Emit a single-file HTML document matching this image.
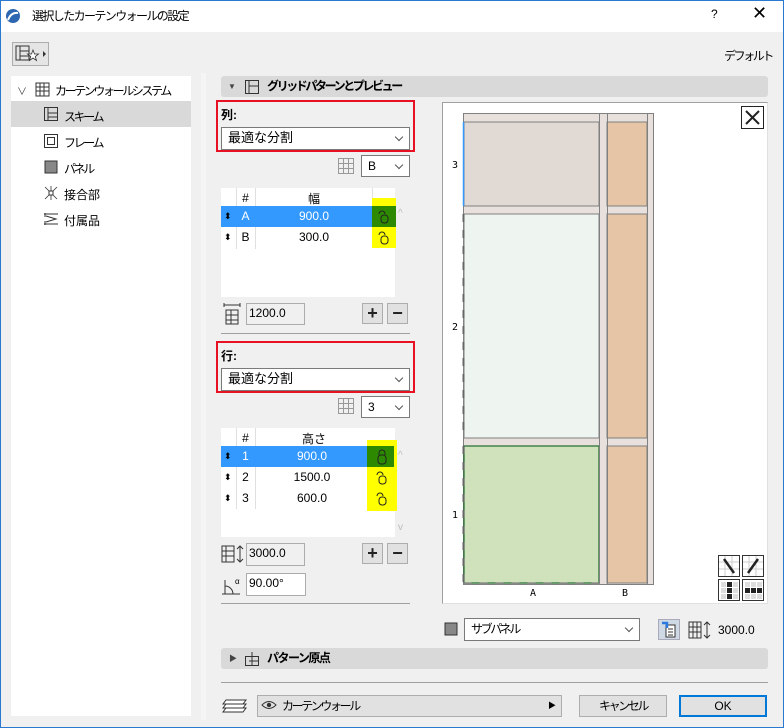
<!DOCTYPE html>
<html><head><meta charset="utf-8"><style>
*{box-sizing:border-box;margin:0;padding:0}
body{width:784px;height:728px;background:#f0f0f0;font-family:"Liberation Sans","Noto Sans CJK JP",sans-serif;font-size:12px;color:#000;position:relative;overflow:hidden}
.a{position:absolute}
.j{letter-spacing:-2.4px}
.sel{position:absolute;background:#fff;border:1px solid #7a7a7a;padding-left:6px;line-height:20px;font-size:12px}
.sel:after{content:"";position:absolute;right:7px;top:6px;width:5px;height:5px;border-right:1px solid #555;border-bottom:1px solid #555;transform:rotate(45deg)}
.inp{position:absolute;background:#fff;border:1px solid #acacac;line-height:19px;padding-left:2px;font-size:12px}
.btn{position:absolute;background:#e1e1e1;border:1px solid #adadad;text-align:center;font-size:18px;line-height:18px;font-weight:bold;color:#222}
.hdr{position:absolute;left:221px;width:547px;height:21px;background:#d9d9d9;border-radius:3px;font-weight:bold;font-size:12px;line-height:21px}
.red{position:absolute;border:2px solid #e81123}
.row{position:absolute;left:221px;width:174px;height:21px;line-height:21px}
.c{position:absolute;text-align:center}
.tx{font-size:10px;font-family:"DejaVu Sans Mono",monospace}
</style></head><body>
<div class="a" style="left:0;top:0;width:784px;height:728px;border:1px solid #2b78d0"></div>
<div class="a" style="left:1px;top:1px;width:782px;height:31px;background:#fff"></div>
<svg class="a" style="left:5px;top:8px" width="16" height="16"><circle cx="8" cy="8" r="7" fill="#2e67b1"/><path d="M3 12 Q6 4 13 5" stroke="#fff" stroke-width="2" fill="none"/></svg>
<div class="a" style="left:32px;top:7px;font-size:12px;letter-spacing:-1.6px">選択したカーテンウォールの設定</div>
<div class="a" style="left:711px;top:7px;font-size:12px">?</div>
<div class="a" style="left:752px;top:3px;font-size:18px;font-weight:300">✕</div>

<div class="a" style="left:12px;top:42px;width:37px;height:24px;background:#e5e5e5;border:1px solid #adadad"></div>
<svg class="a" style="left:14px;top:44px" width="34" height="20"><rect x="2" y="2" width="13" height="14" fill="none" stroke="#333"/><path d="M6 2v14M6 7h9M6 12h9" stroke="#333" fill="none"/><path d="M19 6l1.5 4h4l-3.2 2.5 1.2 4-3.5-2.5-3.5 2.5 1.2-4L13.5 10h4z" fill="#fff" stroke="#333" stroke-width=".8"/><path d="M29 7l3 3-3 3z" fill="#333"/></svg>
<div class="a j" style="left:724px;top:47px">デフォルト</div>

<div class="a" style="left:11px;top:76px;width:180px;height:640px;background:#fff"></div>
<div class="a" style="left:201px;top:73px;width:5px;height:647px;background:#f5f5f5"></div>
<div class="a" style="left:11px;top:101px;width:180px;height:26px;background:#d9d9d9"></div>
<div class="a" style="left:17px;top:83px;font-size:10px;color:#444">∨</div>
<svg class="a" style="left:34px;top:81px" width="16" height="16"><path d="M2 2h13v13H2zM2 6h13M2 10h13M6 2v13M10 2v13" stroke="#333" fill="none"/></svg>
<div class="a j" style="left:55px;top:82px">カーテンウォールシステム</div>
<svg class="a" style="left:43px;top:106px" width="16" height="16"><rect x="1.5" y="1.5" width="13" height="13" fill="none" stroke="#333"/><path d="M5 1.5v13M5 7h9.5M5 11h9.5" stroke="#333"/></svg>
<div class="a j" style="left:64px;top:108px">スキーム</div>
<svg class="a" style="left:43px;top:133px" width="16" height="16"><rect x="1.5" y="1.5" width="13" height="13" fill="none" stroke="#333"/><rect x="4.5" y="4.5" width="7" height="7" fill="none" stroke="#333"/></svg>
<div class="a j" style="left:64px;top:134px">フレーム</div>
<svg class="a" style="left:43px;top:159px" width="16" height="16"><rect x="2" y="2" width="12" height="12" fill="#888" stroke="#333"/></svg>
<div class="a j" style="left:64px;top:160px">パネル</div>
<svg class="a" style="left:43px;top:185px" width="16" height="16"><path d="M2 2l12 12M14 2L2 14M8 1v14" stroke="#333" stroke-width=".8"/><rect x="6" y="6" width="4" height="4" fill="#fff" stroke="#333"/></svg>
<div class="a" style="left:64px;top:186px">接合部</div>
<svg class="a" style="left:43px;top:211px" width="16" height="16"><path d="M1 3h14M1 13h14M3 5l10 3-10 3M2 2v4M2 10v4" stroke="#333" fill="none"/></svg>
<div class="a" style="left:64px;top:212px">付属品</div>

<div class="hdr" style="top:76px"><span style="position:absolute;left:7px;font-size:8px;color:#444">▼</span><svg style="position:absolute;left:23px;top:3px" width="16" height="16"><rect x="1.5" y="1.5" width="13" height="13" fill="none" stroke="#333"/><path d="M5 1.5v13M5 7h9.5" stroke="#333"/></svg><span class="j" style="position:absolute;left:46px">グリッドパターンとプレビュー</span></div>

<div class="red" style="left:216px;top:100px;width:199px;height:52px"></div>
<div class="a" style="left:221px;top:106px;font-weight:bold">列:</div>
<div class="sel" style="left:221px;top:127px;width:189px;height:23px;font-size:13px">最適な分割</div>
<svg class="a" style="left:337px;top:157px" width="18" height="18"><path d="M1.5 1.5h15v15h-15zM1.5 6.5h15M1.5 11.5h15M6.5 1.5v15M11.5 1.5v15" stroke="#999" fill="none"/></svg>
<div class="sel" style="left:361px;top:155px;width:49px;height:22px">B</div>

<div class="a" style="left:221px;top:188px;width:174px;height:109px;background:#fff"></div>
<div class="a" style="left:236px;top:188px;width:1px;height:61px;background:#e0e0e0"></div>
<div class="a" style="left:255px;top:188px;width:1px;height:61px;background:#e0e0e0"></div>
<div class="a" style="left:372px;top:188px;width:1px;height:18px;background:#e0e0e0"></div>
<div class="c" style="left:236px;top:191px;width:19px">#</div>
<div class="c" style="left:256px;top:190px;width:116px">幅</div>
<div class="row" style="top:206px;background:#3399ff;width:151px;color:#fff"><span class="a" style="left:3px;color:#000;font-size:9px">⬍</span><span class="c" style="left:15px;width:19px">A</span><span class="c" style="left:35px;width:116px">900.0</span></div>
<div class="a" style="left:372px;top:198px;width:24px;height:50px;background:#ffff00"></div>
<div class="a" style="left:372px;top:206px;width:24px;height:21px;background:#2d8a00"></div>
<div class="row" style="top:227px"><span class="a" style="left:3px;font-size:9px">⬍</span><span class="c" style="left:15px;width:19px">B</span><span class="c" style="left:35px;width:116px">300.0</span></div>
<svg class="a" style="left:376px;top:208px" width="14" height="40"><path d="M3 6a3 3 0 0 1 6 0" stroke="#222" fill="none"/><rect x="5" y="7" width="7" height="8" rx="3" fill="none" stroke="#222"/><path d="M3 27a3 3 0 0 1 6 0" stroke="#222" fill="none"/><rect x="5" y="28" width="7" height="8" rx="3" fill="none" stroke="#222"/></svg>
<div class="a" style="left:398px;top:208px;color:#bbb;font-size:10px">^</div>
<svg class="a" style="left:222px;top:302px" width="20" height="24"><path d="M2 3h16M2 1v4M18 1v4M4 8h12v14H4zM4 13h12M4 18h12M9 8v14" stroke="#333" fill="none"/></svg>
<div class="inp" style="left:246px;top:303px;width:59px;height:22px;background:#f0f0f0">1200.0</div>
<div class="btn" style="left:362px;top:303px;width:21px;height:21px">+</div>
<div class="btn" style="left:387px;top:303px;width:21px;height:21px">−</div>
<div class="a" style="left:221px;top:333px;width:189px;height:1px;background:#a0a0a0"></div>

<div class="red" style="left:216px;top:341px;width:199px;height:52px"></div>
<div class="a" style="left:221px;top:347px;font-weight:bold">行:</div>
<div class="sel" style="left:221px;top:368px;width:189px;height:23px;font-size:13px">最適な分割</div>
<svg class="a" style="left:337px;top:397px" width="18" height="18"><path d="M1.5 1.5h15v15h-15zM1.5 6.5h15M1.5 11.5h15M6.5 1.5v15M11.5 1.5v15" stroke="#999" fill="none"/></svg>
<div class="sel" style="left:361px;top:396px;width:49px;height:22px">3</div>

<div class="a" style="left:221px;top:428px;width:174px;height:109px;background:#fff"></div>
<div class="a" style="left:236px;top:428px;width:1px;height:81px;background:#e0e0e0"></div>
<div class="a" style="left:255px;top:428px;width:1px;height:81px;background:#e0e0e0"></div>
<div class="c" style="left:236px;top:431px;width:19px">#</div>
<div class="c" style="left:256px;top:430px;width:116px">高さ</div>
<div class="row" style="top:446px;background:#3399ff;width:147px;color:#fff"><span class="a" style="left:3px;color:#000;font-size:9px">⬍</span><span class="c" style="left:15px;width:19px">1</span><span class="c" style="left:35px;width:112px">900.0</span></div>
<div class="a" style="left:367px;top:440px;width:30px;height:71px;background:#ffff00"></div>
<div class="a" style="left:367px;top:446px;width:27px;height:21px;background:#2d8a00"></div>
<div class="row" style="top:467px"><span class="a" style="left:3px;font-size:9px">⬍</span><span class="c" style="left:15px;width:19px">2</span><span class="c" style="left:35px;width:112px">1500.0</span></div>
<div class="row" style="top:488px"><span class="a" style="left:3px;font-size:9px">⬍</span><span class="c" style="left:15px;width:19px">3</span><span class="c" style="left:35px;width:112px">600.0</span></div>
<svg class="a" style="left:374px;top:448px" width="16" height="60"><path d="M5 7V5a3 3 0 0 1 6 0v2" stroke="#222" fill="none"/><rect x="4" y="7" width="8" height="9" rx="3" fill="none" stroke="#222"/><path d="M3 27a3 3 0 0 1 6 0" stroke="#222" fill="none"/><rect x="5" y="28" width="7" height="8" rx="3" fill="none" stroke="#222"/><path d="M3 48a3 3 0 0 1 6 0" stroke="#222" fill="none"/><rect x="5" y="49" width="7" height="8" rx="3" fill="none" stroke="#222"/></svg>
<div class="a" style="left:398px;top:450px;color:#bbb;font-size:10px">^</div>
<div class="a" style="left:398px;top:522px;color:#bbb;font-size:10px">v</div>
<svg class="a" style="left:221px;top:544px" width="24" height="20"><path d="M1 2h12v16H1zM1 7h12M1 12h12M5 2v16M19 2v16M16 5l3-3 3 3M16 15l3 3 3-3" stroke="#333" fill="none"/></svg>
<div class="inp" style="left:246px;top:543px;width:59px;height:23px;background:#f0f0f0">3000.0</div>
<div class="btn" style="left:362px;top:543px;width:21px;height:21px">+</div>
<div class="btn" style="left:387px;top:543px;width:21px;height:21px">−</div>
<svg class="a" style="left:221px;top:574px" width="24" height="22"><path d="M1 20h18M4 20V6M4 12a8 8 0 0 1 8 8" stroke="#333" fill="none"/><text x="14" y="10" font-size="8" font-family="Liberation Sans">α</text></svg>
<div class="inp" style="left:246px;top:573px;width:60px;height:23px">90.00°</div>
<div class="a" style="left:221px;top:603px;width:189px;height:1px;background:#a0a0a0"></div>

<div class="a" style="left:442px;top:102px;width:326px;height:502px;background:#fff;border:1px solid #a0a0a0;border-right-color:#e0e0e0;border-bottom-color:#e0e0e0"></div>
<svg class="a" style="left:442px;top:102px" width="326" height="502">
<rect x="21.5" y="11.5" width="190" height="471" fill="#e8e0dd" stroke="#808080"/>
<rect x="22" y="20" width="135" height="84" fill="#e1d9d3" stroke="#808080"/>
<rect x="165" y="20" width="40" height="84" fill="#e5c5a5" stroke="#808080"/>
<rect x="22" y="112" width="135" height="224" fill="#eef4ef" stroke="#808080"/>
<rect x="165" y="112" width="40" height="224" fill="#e5c5a5" stroke="#808080"/>
<rect x="22" y="344" width="135" height="137" fill="#cfe2bb" stroke="#1e6b2c" stroke-width="1.2"/>
<rect x="165" y="344" width="40" height="137" fill="#e5c5a5" stroke="#808080"/>
<path d="M21.5 481.5h136" stroke="#888" stroke-width="2" stroke-dasharray="8 8"/>
<path d="M157.5 11.5v471M165.5 11.5v471M205.5 11.5v471" stroke="#808080"/>
<path d="M21.5 20v84" stroke="#3399ff" stroke-width="1.5"/>
<path d="M21.5 112v224M21.5 344v138" stroke="#666" stroke-width="2" stroke-dasharray="8 8"/>
<text x="10" y="66" class="tx">3</text><text x="10" y="228" class="tx">2</text><text x="10" y="416" class="tx">1</text>
<text x="88" y="494" class="tx">A</text><text x="180" y="494" class="tx">B</text>
<rect x="299.5" y="4.5" width="22" height="22" fill="#fff" stroke="#222"/>
<path d="M304 9l13 13M317 9l-13 13" stroke="#222" stroke-width="2"/>
<g stroke="#ccc"><path d="M276 460h21M276 467h21M283 454v20M290 454v20M300 460h21M300 467h21M307 454v20M314 454v20"/></g>
<rect x="276.5" y="453.5" width="21" height="21" fill="none" stroke="#333"/>
<rect x="300.5" y="453.5" width="21" height="21" fill="none" stroke="#333"/>
<path d="M282 457l10 14M316 457l-10 14" stroke="#222" stroke-width="2.5"/>
<rect x="276.5" y="477.5" width="21" height="21" fill="#fff" stroke="#333"/>
<rect x="300.5" y="477.5" width="21" height="21" fill="#fff" stroke="#333"/>
<g fill="#ddd"><rect x="279" y="480" width="5" height="5"/><rect x="291" y="480" width="5" height="5"/><rect x="279" y="486" width="5" height="5"/><rect x="291" y="486" width="5" height="5"/><rect x="279" y="492" width="5" height="5"/><rect x="291" y="492" width="5" height="5"/><rect x="303" y="480" width="5" height="5"/><rect x="309" y="480" width="5" height="5"/><rect x="315" y="480" width="5" height="5"/><rect x="303" y="492" width="5" height="5"/><rect x="309" y="492" width="5" height="5"/><rect x="315" y="492" width="5" height="5"/></g>
<g fill="#222"><rect x="285" y="480" width="5" height="5"/><rect x="285" y="486" width="5" height="5"/><rect x="285" y="492" width="5" height="5"/><rect x="303" y="486" width="5" height="5"/><rect x="309" y="486" width="5" height="5"/><rect x="315" y="486" width="5" height="5"/></g>
</svg>

<svg class="a" style="left:443px;top:621px" width="16" height="16"><rect x="2" y="2" width="12" height="12" fill="#888" stroke="#333"/></svg>
<div class="sel j" style="left:464px;top:618px;width:176px;height:23px">サブパネル</div>
<div class="a" style="left:658px;top:619px;width:22px;height:21px;background:#cfd9e6;border:1px solid #aab"></div>
<svg class="a" style="left:660px;top:621px" width="18" height="18"><rect x="6" y="4" width="9" height="12" fill="#fff" stroke="#333"/><path d="M8 8h5M8 11h5M8 14h5" stroke="#333"/><path d="M2 2h5v5" stroke="#2a7ae2" stroke-width="2.5" fill="none"/></svg>
<svg class="a" style="left:688px;top:620px" width="28" height="20"><path d="M1 2h12v16H1zM1 7h12M1 12h12M5 2v16M9 2v16M19 2v16M16 5l3-3 3 3M16 15l3 3 3-3" stroke="#333" fill="none"/></svg>
<div class="a" style="left:718px;top:623px">3000.0</div>

<div class="hdr" style="top:648px"><span style="position:absolute;left:8px;font-size:8px;color:#444">▶</span><svg style="position:absolute;left:23px;top:3px" width="16" height="16"><rect x="1.5" y="5.5" width="13" height="9" fill="none" stroke="#333"/><path d="M8 1v14M5 10h10" stroke="#333"/></svg><span style="position:absolute;left:46px;letter-spacing:-1.5px">パターン原点</span></div>
<div class="a" style="left:221px;top:682px;width:547px;height:1px;background:#a0a0a0"></div>

<svg class="a" style="left:222px;top:697px" width="26" height="18"><path d="M4 3h20l-3 4H1zM4 7h20l-3 4H1zM4 11h20l-3 4H1z" fill="#fff" stroke="#333"/></svg>
<div class="a" style="left:257px;top:695px;width:305px;height:22px;background:#e1e1e1;border:1px solid #adadad;line-height:20px;padding-left:24px"><span class="j">カーテンウォール</span><span style="position:absolute;right:5px;font-size:8px">▶</span></div>
<svg class="a" style="left:261px;top:699px" width="16" height="12"><path d="M1 6Q8-1 15 6Q8 13 1 6z" fill="none" stroke="#333"/><circle cx="8" cy="6" r="2.2" fill="#333"/></svg>
<div class="a j" style="left:579px;top:695px;width:88px;height:22px;background:#e1e1e1;border:1px solid #adadad;text-align:center;line-height:20px">キャンセル</div>
<div class="a" style="left:679px;top:695px;width:88px;height:22px;background:#e1e1e1;border:2px solid #0078d7;text-align:center;line-height:18px">OK</div>
</body></html>
